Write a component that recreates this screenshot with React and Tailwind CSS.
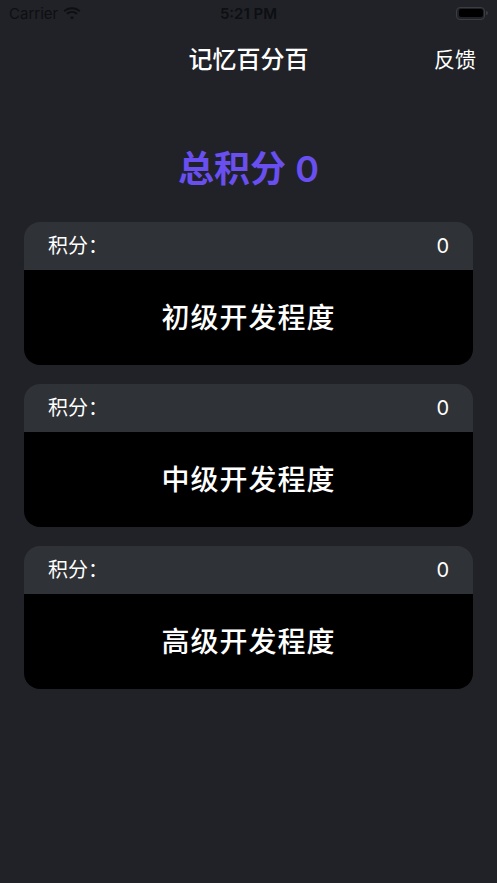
function StatusBar() {
  return (
    <div className="relative flex h-[26px] items-center px-[9px] text-[#0d0f12]">
      <div className="flex items-center gap-[5px]">
        <span className="text-[15px] leading-none">Carrier</span>
        <svg width="18" height="13" viewBox="0 0 18 13" fill="currentColor">
          <path d="M9 2.2c2.7 0 5.2 1 7.1 2.8l1.3-1.4C15.2 1.5 12.2.3 9 .3S2.8 1.5.6 3.6l1.3 1.4C3.8 3.2 6.3 2.2 9 2.2z" />
          <path d="M9 5.9c1.7 0 3.3.6 4.5 1.7l1.3-1.4C13.2 4.8 11.2 4 9 4s-4.2.8-5.8 2.2l1.3 1.4C5.7 6.5 7.3 5.9 9 5.9z" />
          <path d="M9 9.5c.8 0 1.5.3 2 .8L9 12.6 7 10.3c.5-.5 1.2-.8 2-.8z" />
        </svg>
      </div>
      <span className="absolute left-1/2 top-1/2 -translate-x-1/2 -translate-y-1/2 text-[15px] font-semibold leading-none">5:21 PM</span>
      <div className="ml-auto flex items-center gap-[1px]">
        <div className="h-[13px] w-[29px] rounded-[4px] border border-[#3a3d42] p-[1.5px]">
          <div className="h-full w-full rounded-[2px] bg-black" />
        </div>
        <div className="h-[4px] w-[2px] rounded-r-sm bg-[#3a3d42]" />
      </div>
    </div>
  )
}

function LevelCard({ title }) {
  return (
    <div className="overflow-hidden rounded-[16px]">
      <div className="flex h-[48px] items-center justify-between bg-[#2f3236] px-[24px] text-[20px] text-white">
        <span>积分：</span>
        <span>0</span>
      </div>
      <div className="flex h-[95px] items-center justify-center bg-black text-[28px] font-medium tracking-[1px] text-white">
        {title}
      </div>
    </div>
  )
}

export default function App() {
  const levels = ['初级开发程度', '中级开发程度', '高级开发程度']
  return (
    <div
      className="min-h-[883px] w-full bg-[#202227]"
      style={{ fontFamily: 'Inter, "Noto Sans CJK SC", sans-serif' }}
    >
      <StatusBar />
      <div className="relative flex h-[68px] items-center justify-center">
        <span className="text-[24px] font-medium text-white">记忆百分百</span>
        <span className="absolute right-[21px] text-[21px] text-white">反馈</span>
      </div>
      <div className="mt-[57px] flex justify-center text-[36px] font-semibold leading-none text-[#6a4ff0]">
        总积分 0
      </div>
      <div className="mt-[35px] flex flex-col gap-[19px] px-[24px]">
        {levels.map((t) => (
          <LevelCard key={t} title={t} />
        ))}
      </div>
    </div>
  )
}
